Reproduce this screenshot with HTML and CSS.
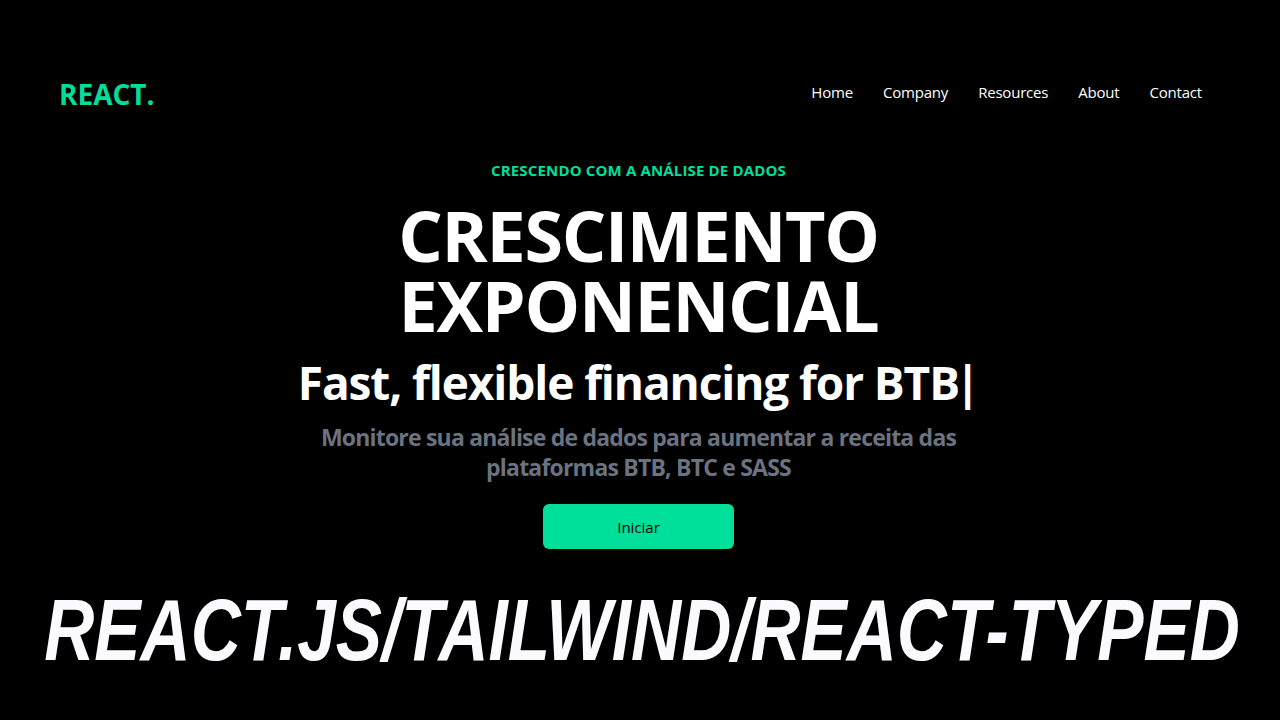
FILE: index.html
```html
<!DOCTYPE html>
<html lang="pt">
<head>
<meta charset="utf-8">
<title>REACT.</title>
<link rel="stylesheet" href="styles.css">
</head>
<body>
<header class="nav">
  <h1 class="logo">REACT.</h1>
  <ul class="menu">
    <li>Home</li>
    <li>Company</li>
    <li>Resources</li>
    <li>About</li>
    <li>Contact</li>
  </ul>
</header>
<main class="hero">
  <p class="eyebrow">CRESCENDO COM A ANÁLISE DE DADOS</p>
  <h2 class="title">CRESCIMENTO<br>EXPONENCIAL</h2>
  <p class="typed">Fast, flexible financing for BTB<span class="caret">|</span></p>
  <p class="lead">Monitore sua análise de dados para aumentar a receita das plataformas BTB, BTC e SASS</p>
  <button class="cta">Iniciar</button>
</main>
<div class="banner"><span class="banner-text">REACT.JS/TAILWIND/REACT-TYPED</span></div>
</body>
</html>
```
FILE: styles.css
```css
html, body {
  margin: 0;
  padding: 0;
  background: #000;
  color: #fff;
  font-family: "Open Sans", "Noto Sans", sans-serif;
  height: 720px;
  overflow: hidden;
}
.nav {
  display: flex;
  justify-content: space-between;
  align-items: center;
  height: 96px;
  margin-top: 46px;
  padding: 0 63px 0 59px;
}
.logo {
  margin: 0;
  font-size: 28px;
  font-weight: 700;
  color: #00df9a;
  line-height: 1;
}
.menu {
  display: flex;
  list-style: none;
  margin: -4px 0 0;
  padding: 0;
  font-size: 15px;
  letter-spacing: -0.2px;
}
.menu li {
  padding: 0 15px;
}
.hero {
  display: flex;
  flex-direction: column;
  align-items: center;
  text-align: center;
  padding-right: 3px;
}
.eyebrow {
  margin: 18px 0 0;
  font-size: 15px;
  line-height: 20px;
  font-weight: 700;
  letter-spacing: 0.15px;
  color: #00df9a;
}
.title {
  margin: 20px 0 0;
  font-size: 70px;
  line-height: 70px;
  font-weight: 700;
  letter-spacing: -1.3px;
}
.typed {
  margin: 14px 0 0;
  font-size: 46px;
  line-height: 56px;
  font-weight: 700;
  letter-spacing: -1.1px;
}
.caret {
  margin-left: -4px;
}
.lead {
  margin: 12px 0 0;
  max-width: 680px;
  font-size: 23px;
  line-height: 30px;
  font-weight: 700;
  letter-spacing: -0.8px;
  color: #6b7280;
}
.cta {
  margin-top: 22px;
  width: 191px;
  height: 45px;
  border: 0;
  border-radius: 6px;
  background: #00df9a;
  color: #000;
  font-family: inherit;
  font-size: 15px;
  font-weight: 500;
}
.banner {
  display: flex;
  justify-content: center;
  margin-top: 37px;
  padding-left: 4px;
  white-space: nowrap;
  font-family: "Liberation Sans", Arial, sans-serif;
  font-weight: 700;
  font-style: italic;
  font-size: 87px;
  line-height: 87px;
  color: #fbfaff;
}
.banner-text {
  display: inline-block;
  flex: none;
  transform: scaleX(0.797);
}
```
